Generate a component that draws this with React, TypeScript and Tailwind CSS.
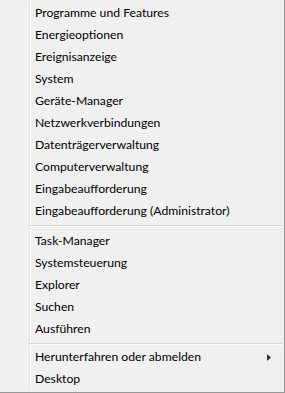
const groups: string[][] = [
  [
    "Programme und Features",
    "Energieoptionen",
    "Ereignisanzeige",
    "System",
    "Geräte-Manager",
    "Netzwerkverbindungen",
    "Datenträgerverwaltung",
    "Computerverwaltung",
    "Eingabeaufforderung",
    "Eingabeaufforderung (Administrator)",
  ],
  ["Task-Manager", "Systemsteuerung", "Explorer", "Suchen", "Ausführen"],
  ["Herunterfahren oder abmelden", "Desktop"],
]

function MenuRow({ label, sub }: { label: string; sub?: boolean }) {
  return (
    <div className="flex h-[22px] items-center pl-[35px] pr-[13px]">
      <span className="flex-1 text-[12.2px] leading-none text-black">{label}</span>
      {sub && (
        <svg width="4" height="7" viewBox="0 0 4 7" className="mt-[1px]">
          <path d="M0 0 L4 3.5 L0 7 Z" fill="#333" />
        </svg>
      )}
    </div>
  )
}

function Separator({ last }: { last?: boolean }) {
  return (
    <div
      className={
        last
          ? "mt-[3px] mb-[1px] ml-[29px] mr-[2px] border-t border-b border-t-[#d7d7d7] border-b-white"
          : "my-[3px] ml-[29px] mr-[2px] border-t border-b border-t-[#d7d7d7] border-b-white"
      }
    />
  )
}

export default function App() {
  return (
    <div
      className="relative h-[393px] w-[285px] overflow-hidden bg-[#f0f0f0] border-r border-b border-[#979797]"
      style={{ fontFamily: 'Lato, "Noto Sans", sans-serif' }}
    >
      {/* gutter line */}
      <div className="absolute left-[29px] top-[1px] bottom-[3px] w-[2px] border-l border-l-[#e2e3e3] border-r border-r-white" />
      <div className="relative pt-[2px]">
        {groups.map((g, gi) => (
          <div key={gi}>
            {gi > 0 && <Separator last={gi === 2} />}
            {g.map((item) => (
              <MenuRow key={item} label={item} sub={item.startsWith("Herunterfahren")} />
            ))}
          </div>
        ))}
      </div>
    </div>
  )
}
